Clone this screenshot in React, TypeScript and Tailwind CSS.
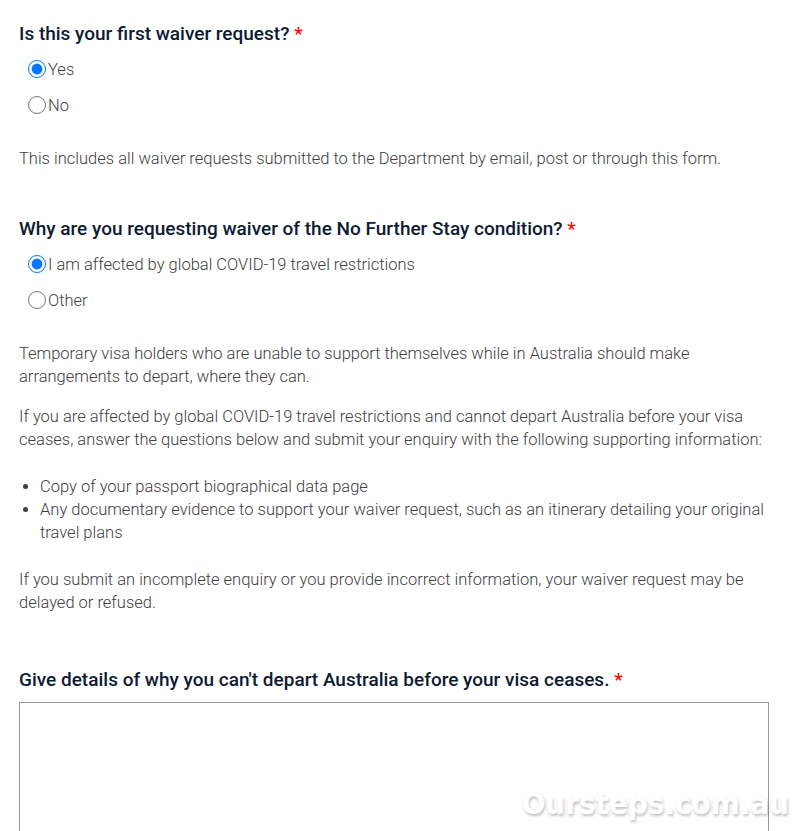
import React from "react";

const body = "text-[16.5px] leading-[23px] text-[#404040] font-light";

function Radio({ label, checked, name }: { label: string; checked?: boolean; name: string }) {
  return (
    <label className="flex items-center h-[36px] pl-[9px]">
      <input
        type="radio"
        name={name}
        defaultChecked={checked}
        className="m-0 w-[18px] h-[18px] accent-[#0075ff]"
      />
      <span className={`ml-[2px] ${body}`}>{label}</span>
    </label>
  );
}

function Heading({ children }: { children: React.ReactNode }) {
  return (
    <h2 className="text-[19px] leading-[24px] font-medium text-[#0d1b33]">
      {children} <span className="text-[#ff0000]">*</span>
    </h2>
  );
}

export default function App() {
  return (
    <div
      className="relative w-[793px] h-[831px] overflow-hidden bg-white"
      style={{ fontFamily: "Roboto, 'Liberation Sans', sans-serif" }}
    >
      <div className="pl-[19px] pt-[22px] w-[769px]">
        <Heading>Is this your first waiver request?</Heading>
        <div className="mt-[5px]">
          <Radio name="first" label="Yes" checked />
          <Radio name="first" label="No" />
        </div>
        <p className={`mt-[24px] ${body}`}>
          This includes all waiver requests submitted to the Department by email, post or through this form.
        </p>

        <div className="mt-[47px]">
          <Heading>Why are you requesting waiver of the No Further Stay condition?</Heading>
        </div>
        <div className="mt-[5px]">
          <Radio name="why" label="I am affected by global COVID-19 travel restrictions" checked />
          <Radio name="why" label="Other" />
        </div>
        <p className={`mt-[24px] ${body}`}>
          Temporary visa holders who are unable to support themselves while in Australia should make arrangements
          to depart, where they can.
        </p>
        <p className={`mt-[17px] ${body}`}>
          If you are affected by global COVID-19 travel restrictions and cannot depart Australia before your visa
          ceases, answer the questions below and submit your enquiry with the following supporting information:
        </p>
        <ul className={`mt-[24px] list-disc pl-[21px] ${body}`}>
          <li>Copy of your passport biographical data page</li>
          <li>
            Any documentary evidence to support your waiver request, such as an itinerary detailing your original
            travel plans
          </li>
        </ul>
        <p className={`mt-[24px] ${body}`}>
          If you submit an incomplete enquiry or you provide incorrect information, your waiver request may be
          delayed or refused.
        </p>

        <div className="mt-[54px]">
          <Heading>Give details of why you can't depart Australia before your visa ceases.</Heading>
        </div>
        <textarea className="mt-[10px] block w-[750px] h-[200px] border border-[#999999] resize-none outline-none" />
      </div>

      <div
        className="absolute right-[4px] bottom-[10px] text-[31px] font-bold text-white select-none"
        style={{
          fontFamily: "'DejaVu Sans Condensed', 'DejaVu Sans', sans-serif",
          fontStretch: "condensed",
          textShadow: "1px 2px 3px rgba(0,0,0,0.25)",
          lineHeight: "36px",
        }}
      >
        Oursteps.com.au
      </div>
    </div>
  );
}
